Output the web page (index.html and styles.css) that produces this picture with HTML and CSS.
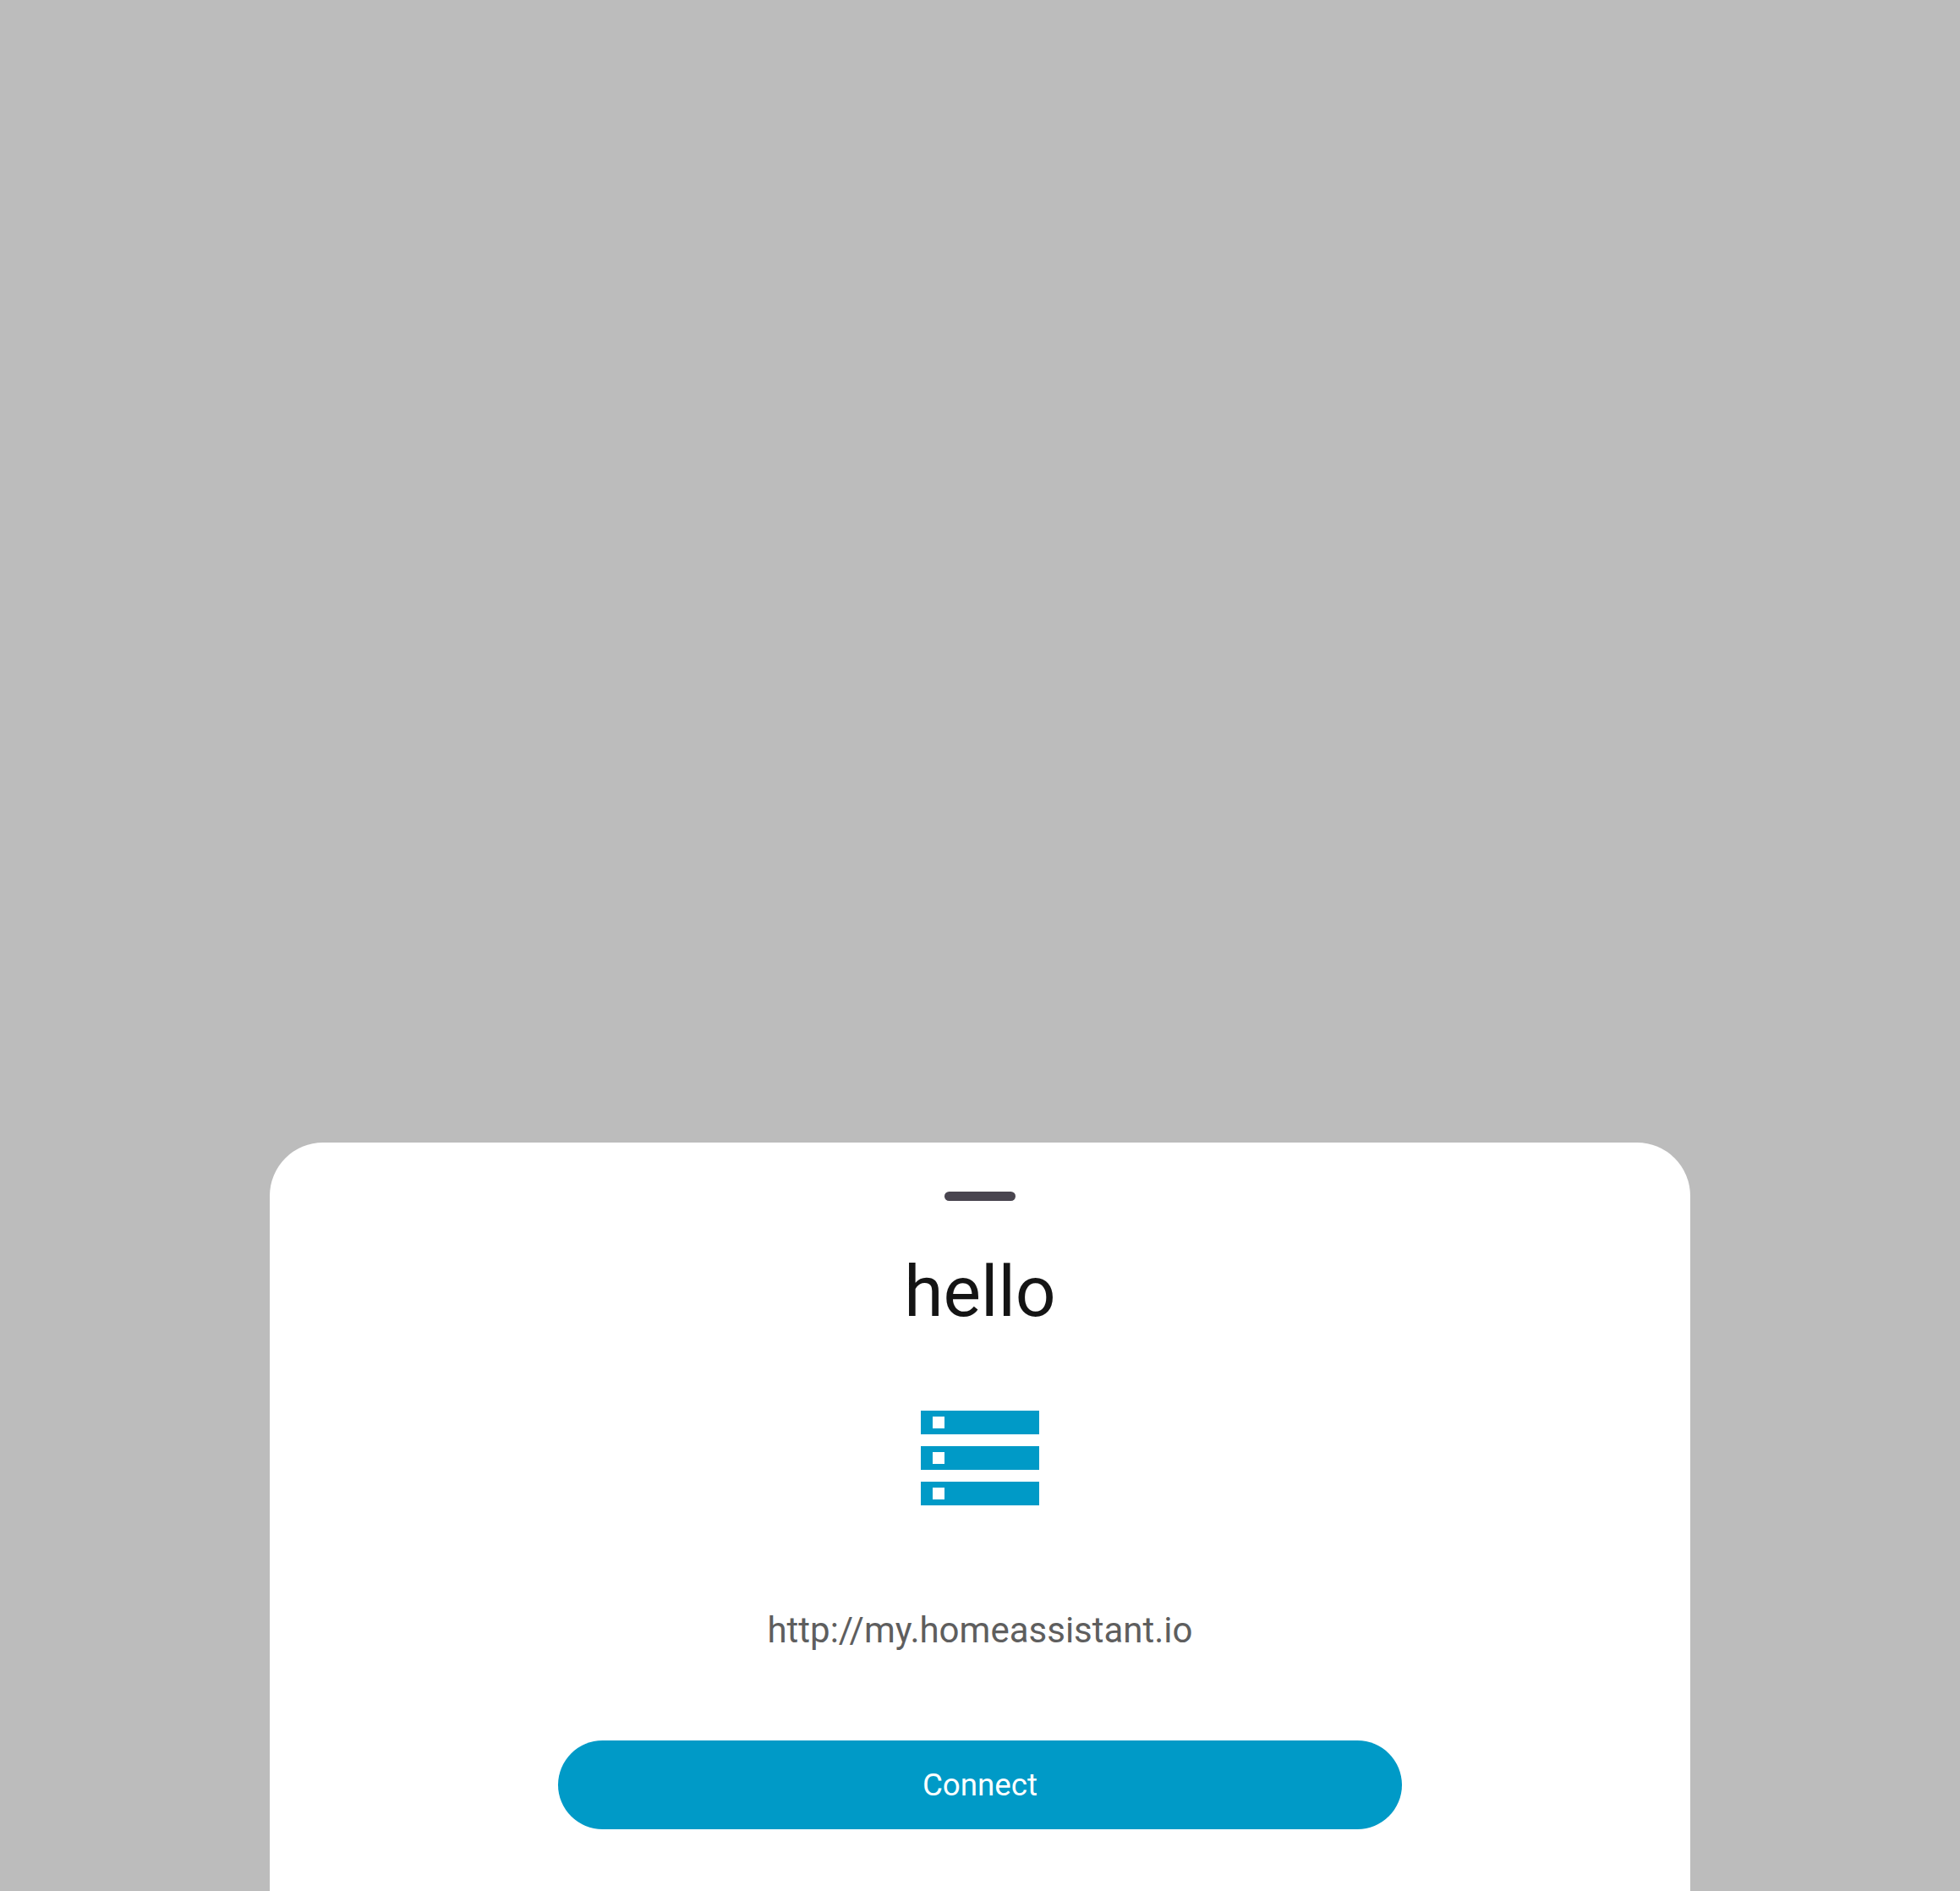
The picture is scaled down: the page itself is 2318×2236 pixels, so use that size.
FILE: index.html
```html
<!DOCTYPE html>
<html lang="en">
<head>
<meta charset="utf-8">
<title>Connect to server</title>
<link rel="stylesheet" href="styles.css">
</head>
<body>
<main class="scrim">
  <section class="sheet">
    <div class="handle"></div>
    <h1 class="title">hello</h1>
    <svg class="icon" viewBox="0 0 24 24" aria-hidden="true"><path d="M2 20h20v-4H2v4zm2-3h2v2H4v-2zM2 4v4h20V4H2zm4 3H4V5h2v2zm-4 7h20v-4H2v4zm2-3h2v2H4v-2z"/></svg>
    <p class="url">http://my.homeassistant.io</p>
    <button class="connect" type="button">Connect</button>
  </section>
</main>
</body>
</html>
```
FILE: styles.css
```css
* { box-sizing: border-box; }
body { margin: 0; font-family: Roboto, sans-serif; }
.scrim {
  display: flex;
  align-items: flex-end;
  justify-content: center;
  height: 100vh;
  background: #bcbcbc;
}
.sheet {
  display: flex;
  flex-direction: column;
  align-items: center;
  width: 1680px;
  height: 885px;
  padding-top: 58px;
  border-radius: 63px 63px 0 0;
  background: #fff;
}
.handle {
  width: 84px;
  height: 11px;
  border-radius: 6px;
  background: #49454f;
}
.title {
  margin: 52px 0 0;
  font-size: 84px;
  font-weight: 400;
  line-height: 112px;
  color: #141414;
}
.icon {
  width: 168px;
  height: 168px;
  margin-top: 56px;
  fill: #009ac7;
}
.url {
  margin: 88px 0 0;
  font-size: 42px;
  line-height: 63px;
  color: #5e5e5e;
}
.connect {
  width: 998px;
  height: 105px;
  margin-top: 99px;
  padding: 0;
  border: 0;
  border-radius: 53px;
  background: #009ac7;
  font: 400 36.75px/53px Roboto, sans-serif;
  color: #fff;
}
```
